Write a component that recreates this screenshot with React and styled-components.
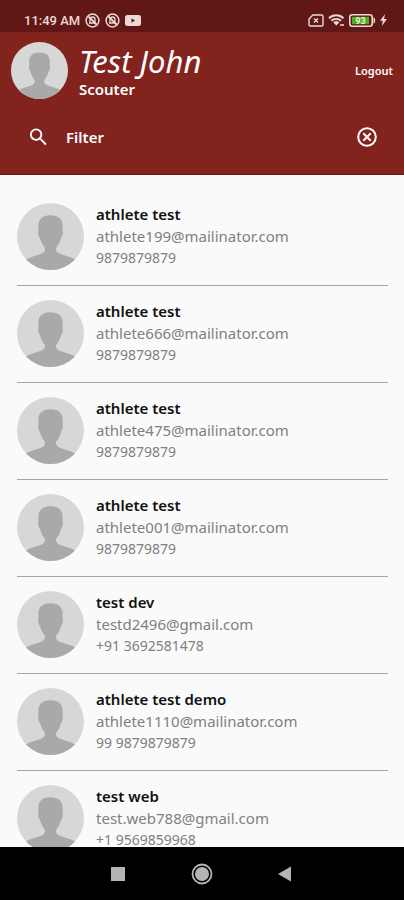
import React, { useState } from 'react';
import styled, { createGlobalStyle } from 'styled-components';

const GlobalStyle = createGlobalStyle`
  * {
    box-sizing: border-box;
  }
  body {
    margin: 0;
    background: #fafafa;
    font-family: 'Noto Sans', 'Open Sans', sans-serif;
  }
  button,
  input {
    font-family: inherit;
    border: none;
    background: none;
    padding: 0;
    color: inherit;
  }
  button {
    cursor: pointer;
  }
  svg {
    display: block;
    flex-shrink: 0;
  }
`;

const Screen = styled.div`
  display: flex;
  flex-direction: column;
  height: 100vh;
`;

const StatusBar = styled.div`
  display: flex;
  align-items: center;
  justify-content: space-between;
  flex-shrink: 0;
  height: 32px;
  padding: 8px 17px 0 24px;
  background: #611715;
  color: #ecd9d7;
`;

const StatusGroup = styled.div`
  display: flex;
  align-items: center;
  gap: ${(props) => props.$gap};
`;

const Time = styled.span`
  font-family: Roboto, sans-serif;
  font-size: 13px;
  font-weight: 500;
`;

const Header = styled.header`
  flex-shrink: 0;
  background: #82231e;
  border-bottom: 1px solid #7a1010;
  color: #ffffff;
`;

const Profile = styled.div`
  display: flex;
  align-items: center;
  gap: 11px;
  padding: 10px 11px 0;
`;

const ProfileText = styled.div`
  flex: 1;
  min-width: 0;
`;

const ProfileName = styled.h1`
  margin: 0;
  font-size: 31px;
  font-style: italic;
  font-weight: 400;
  line-height: 36px;
`;

const Role = styled.p`
  margin: 0;
  font-size: 15px;
  font-weight: 600;
  line-height: 20px;
`;

const LogoutButton = styled.button`
  font-size: 11px;
  font-weight: 600;
  line-height: 16px;
`;

const FilterBar = styled.form`
  display: flex;
  align-items: center;
  padding: 26px 26px 25px 27px;
`;

const FilterInput = styled.input`
  flex: 1;
  min-width: 0;
  margin-left: 16px;
  font-size: 15px;
  font-weight: 600;
  line-height: 24px;
  outline: none;
  &::placeholder {
    color: #ffffff;
    opacity: 1;
  }
`;

const List = styled.ul`
  flex: 1;
  min-height: 0;
  margin: 0;
  padding: 14px 16px 0 17px;
  list-style: none;
  overflow-y: auto;
  scrollbar-width: none;
`;

const Row = styled.li`
  display: flex;
  gap: 12px;
  padding: 14px 0 15px;
  border-bottom: 1px solid #a6a6a6;
`;

const Details = styled.div`
  min-width: 0;
  line-height: 22px;
  color: #808080;
`;

const AthleteName = styled.div`
  font-size: 15px;
  font-weight: 600;
  color: #111111;
`;

const Email = styled.div`
  font-size: 15px;
`;

const Phone = styled.div`
  font-size: 14px;
`;

const NavBar = styled.nav`
  display: flex;
  align-items: center;
  justify-content: center;
  gap: 60px;
  flex-shrink: 0;
  height: 53px;
  background: #000000;
  color: #b4b4b4;
`;

const Avatar = ({ size }) => (
  <svg width={size} height={size} viewBox="0 0 68 68" aria-hidden="true">
    <clipPath id={`round-${size}`}>
      <circle cx="34" cy="34" r="34" />
    </clipPath>
    <g clipPath={`url(#round-${size})`}>
      <rect width="68" height="68" fill="#d7d7d7" />
      <path
        d="M34 12.500C26 12.500 21.700 16.500 21.700 23V28C21 29.500 21.600 34 23.300 35.500C24.200 39.500 26.500 43.500 28.300 45.500V48C27.500 52.500 17 53 9.500 57L5 68H63L58.500 57C51 53 40.500 52.500 39.700 48V45.500C41.500 43.500 43.800 39.500 44.700 35.500C46.400 34 47 29.500 46.300 28V23C46.300 16.500 42 12.500 34 12.500Z"
        fill="#a9a9a9"
      />
    </g>
  </svg>
);

const BlockedIcon = () => (
  <svg width="15" height="15" viewBox="0 0 15 15" fill="none" stroke="currentColor">
    <circle cx="7.500" cy="7.500" r="6.400" strokeWidth="1.500" />
    <path d="M5 9.800V6.500a2.500 2.500 0 0 1 5 0v3.300M4 10h7" strokeWidth="1.300" />
    <path d="M3.500 3.500l8 8" strokeWidth="1.800" />
  </svg>
);

const VideoIcon = () => (
  <svg width="16" height="11" viewBox="0 0 16 11">
    <rect width="16" height="11" rx="2.500" fill="currentColor" />
    <path d="M6.500 3.300v4.400l3.500-2.200z" fill="#611715" />
  </svg>
);

const SimIcon = () => (
  <svg width="16" height="13" viewBox="0 0 16 13" fill="none" stroke="currentColor">
    <path
      d="M4.800 1H13.500a1.500 1.500 0 0 1 1.500 1.500v8a1.500 1.500 0 0 1-1.500 1.500h-11A1.500 1.500 0 0 1 1 10.500V5z"
      strokeWidth="1.400"
    />
    <path d="M6 4.500l4 4M10 4.500l-4 4" strokeWidth="1.400" />
  </svg>
);

const WifiIcon = () => (
  <svg width="17" height="13" viewBox="0 0 17 13" fill="none" stroke="currentColor">
    <path d="M1 4.200a10.500 10.500 0 0 1 14.500 0" strokeWidth="1.900" />
    <path d="M3.400 6.800a7 7 0 0 1 9.700 0" strokeWidth="1.900" />
    <path d="M5.300 8.400a4.300 4.300 0 0 1 6 0L8.300 11.600z" fill="currentColor" stroke="none" />
    <path d="M12 11h4" strokeWidth="1.500" />
  </svg>
);

const BatteryIcon = () => (
  <svg width="27" height="13" viewBox="0 0 27 13">
    <rect x="0.800" y="0.800" width="22.400" height="11.400" rx="2.500" fill="none" stroke="currentColor" strokeWidth="1.600" />
    <path d="M24.500 3.500q1.700 0 1.700 3t-1.700 3z" fill="currentColor" />
    <rect x="3" y="2.800" width="17" height="7.400" fill="#4fae1d" />
    <text x="11.500" y="9.700" fontSize="9" fontWeight="700" fontFamily="Roboto, sans-serif" textAnchor="middle" fill="#e4f3dc">
      93
    </text>
  </svg>
);

const BoltIcon = () => (
  <svg width="7" height="12" viewBox="0 0 7 12">
    <path d="M5 0L0 6.800h2.800L1.800 12 7 5H4.100z" fill="currentColor" />
  </svg>
);

const SearchIcon = () => (
  <svg width="23" height="24" viewBox="0 0 24 24">
    <path
      d="M15.500 14h-.79l-.28-.27A6.470 6.470 0 0 0 16 9.500 6.500 6.500 0 1 0 9.500 16c1.610 0 3.090-.59 4.230-1.570l.27.28v.79l5 4.990L20.490 19l-4.990-5zm-6 0C7.010 14 5 11.990 5 9.500S7.010 5 9.500 5 14 7.010 14 9.500 11.990 14 9.500 14z"
      fill="currentColor"
    />
  </svg>
);

const ClearIcon = () => (
  <svg width="22" height="22" viewBox="0 0 22 22" fill="none" stroke="currentColor" strokeWidth="2">
    <circle cx="11" cy="11" r="8.800" />
    <path d="M7.300 7.300l7.400 7.400M14.700 7.300l-7.400 7.400" />
  </svg>
);

const SquareIcon = () => (
  <svg width="24" height="24" viewBox="0 0 24 24">
    <rect x="5" y="5" width="14" height="14" fill="currentColor" />
  </svg>
);

const HomeIcon = () => (
  <svg width="24" height="24" viewBox="0 0 24 24">
    <circle cx="12" cy="12" r="9.500" fill="none" stroke="currentColor" strokeWidth="1.800" />
    <circle cx="12" cy="12" r="7" fill="currentColor" />
  </svg>
);

const BackIcon = () => (
  <svg width="24" height="24" viewBox="0 0 24 24">
    <path d="M4 12L17 4.500V19.500z" fill="currentColor" />
  </svg>
);

const athletes = [
  { id: 0, name: 'athlete test', email: 'athlete199@mailinator.com', phone: '9879879879' },
  { id: 1, name: 'athlete test', email: 'athlete666@mailinator.com', phone: '9879879879' },
  { id: 2, name: 'athlete test', email: 'athlete475@mailinator.com', phone: '9879879879' },
  { id: 3, name: 'athlete test', email: 'athlete001@mailinator.com', phone: '9879879879' },
  { id: 4, name: 'test dev', email: 'testd2496@gmail.com', phone: '+91 3692581478' },
  { id: 5, name: 'athlete test demo', email: 'athlete1110@mailinator.com', phone: '99 9879879879' },
  { id: 6, name: 'test web', email: 'test.web788@gmail.com', phone: '+1 9569859968' },
];

function App() {
  const [filter, setFilter] = useState('');
  const visible = athletes.filter((item) =>
    (item.name + item.email).includes(filter.toLowerCase())
  );

  return (
    <Screen>
      <GlobalStyle />
      <StatusBar>
        <StatusGroup $gap="5px">
          <Time>11:49 AM</Time>
          <BlockedIcon />
          <BlockedIcon />
          <VideoIcon />
        </StatusGroup>
        <StatusGroup $gap="4px">
          <SimIcon />
          <WifiIcon />
          <BatteryIcon />
          <BoltIcon />
        </StatusGroup>
      </StatusBar>

      <Header>
        <Profile>
          <Avatar size={57} />
          <ProfileText>
            <ProfileName>Test John</ProfileName>
            <Role>Scouter</Role>
          </ProfileText>
          <LogoutButton type="button">Logout</LogoutButton>
        </Profile>
        <FilterBar onSubmit={(e) => e.preventDefault()}>
          <SearchIcon />
          <FilterInput
            aria-label="Filter"
            placeholder="Filter"
            value={filter}
            onChange={(e) => setFilter(e.target.value)}
          />
          <button type="button" aria-label="Clear filter" onClick={() => setFilter('')}>
            <ClearIcon />
          </button>
        </FilterBar>
      </Header>

      <List>
        {visible.map((item) => (
          <Row key={item.id}>
            <Avatar size={67} />
            <Details>
              <AthleteName>{item.name}</AthleteName>
              <Email>{item.email}</Email>
              <Phone>{item.phone}</Phone>
            </Details>
          </Row>
        ))}
      </List>

      <NavBar>
        <button type="button" aria-label="Recent apps">
          <SquareIcon />
        </button>
        <button type="button" aria-label="Home">
          <HomeIcon />
        </button>
        <button type="button" aria-label="Back">
          <BackIcon />
        </button>
      </NavBar>
    </Screen>
  );
}

export default App;
